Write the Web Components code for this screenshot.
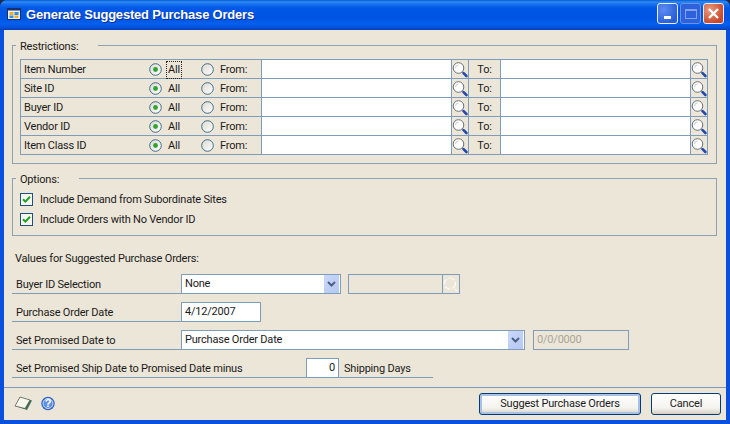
<!DOCTYPE html>
<html>
<head>
<meta charset="utf-8">
<title>Generate Suggested Purchase Orders</title>
<style>
  html { background: #1b2a4a; }
  body { margin: 0; font: 11px Roboto, "Liberation Sans", Arial, sans-serif; letter-spacing: -.2px; color: #1a1a1a; }
</style>
</head>
<body>
<xp-window caption="Generate Suggested Purchase Orders">
  <xp-group caption="Restrictions:">
    <range-table>
      <range-row label="Item Number" focused></range-row>
      <range-row label="Site ID"></range-row>
      <range-row label="Buyer ID"></range-row>
      <range-row label="Vendor ID"></range-row>
      <range-row label="Item Class ID"></range-row>
    </range-table>
  </xp-group>
  <xp-group caption="Options:" class="options">
    <xp-check>Include Demand from Subordinate Sites</xp-check>
    <xp-check>Include Orders with No Vendor ID</xp-check>
  </xp-group>
  <values-form></values-form>
  <dialog-footer></dialog-footer>
</xp-window>

<script>
const LOOKUP_ICON = `<svg width="16" height="17" viewBox="0 0 16 17">
  <circle cx="6.5" cy="7" r="5.3" fill="#fff" stroke="#6a6f76" stroke-width="1"/>
  <path d="M3.5 7a3 3 0 0 1 3-3" fill="none" stroke="#c4cad2"/>
  <path d="M10.5 11l1 1" stroke="#888" stroke-width="1.3"/>
  <path d="M11.6 12.2l2.8 2.8" stroke="#2348b0" stroke-width="2.6" stroke-linecap="round"/>
</svg>`;

const LOOKUP_OFF_ICON = `<svg width="16" height="17" viewBox="0 0 16 17">
  <circle cx="7" cy="7.5" r="5.5" fill="none" stroke="#fbfaf5" stroke-width="1.2" stroke-dasharray="6 2"/>
  <path d="M12 13l2 2" stroke="#fbfaf5" stroke-width="1.6"/>
</svg>`;

const CHEVRON = `<svg width="9" height="7" viewBox="0 0 9 7"><path d="M1 1l3.5 3.5L8 1" fill="none" stroke="#4d6185" stroke-width="2"/></svg>`;

class XpWindow extends HTMLElement {
  connectedCallback() {
    this.attachShadow({ mode: 'open' });
    this.shadowRoot.innerHTML = `
      <style>
        :host { display: block; width: 730px; height: 424px; }
        .frame {
          height: 424px; box-sizing: border-box; display: flex; flex-direction: column;
          background: #0a50de; border-radius: 7px 7px 0 0; overflow: hidden;
        }
        .bar {
          height: 30px; flex: none; display: flex; align-items: center; padding: 0 6px 3px 7px; box-sizing: border-box;
          background: linear-gradient(#0a5ad4 0, #2d8bf5 2px, #1a6ff0 4px, #0058e6 8px, #0054e3 18px, #0460ec 24px, #0454e0 27px, #0840b8 30px);
        }
        .icon { display: block; margin-right: 5px; }
        .title {
          flex: 1; color: #fff; font: bold 13px "Liberation Sans", Arial, sans-serif; letter-spacing: -.2px;
          text-shadow: 1px 1px 0 #0a2f9a; position: relative; top: 1px;
        }
        .caps { display: flex; gap: 2px; }
        .cap {
          width: 21px; height: 21px; box-sizing: border-box; border: 1px solid #e8eefc; border-radius: 3px;
          background: radial-gradient(circle at 30% 30%, #5d8cf0, #2a5ed8 75%); position: relative;
        }
        .cap.off { background: #2d62dc; border-color: #6d93e6; }
        .cap.close { background: radial-gradient(circle at 30% 30%, #e89a80, #c9472a 75%); }
        .cap svg { display: block; position: absolute; left: 3px; top: 3px; }
        .body {
          flex: 1; margin: 0 4px 4px; background: #ece6d8; display: flex; flex-direction: column; min-height: 0;
        }
      </style>
      <div class="frame">
        <div class="bar">
          <svg class="icon" width="14" height="12" viewBox="0 0 14 12">
            <rect width="14" height="12" fill="#e8eef8"/>
            <rect x="0" y="0" width="14" height="2.5" fill="#16306e"/>
            <rect x="0" y="0" width="1" height="12" fill="#16306e"/>
            <rect x="13" y="0" width="1" height="12" fill="#16306e"/>
            <rect x="0" y="11" width="14" height="1" fill="#16306e"/>
            <rect x="2.5" y="4" width="4" height="3" fill="#f0b020"/>
            <rect x="7.5" y="4" width="4" height="3" fill="#3a8ad8"/>
            <rect x="2.5" y="7.5" width="4" height="2.5" fill="#3a8ad8"/>
            <rect x="7.5" y="7.5" width="4" height="2.5" fill="#f0b020"/>
          </svg>
          <span class="title">${this.getAttribute('caption')}</span>
          <div class="caps">
            <div class="cap"><svg width="13" height="13"><rect x="3" y="9" width="7" height="3" fill="#fff"/></svg></div>
            <div class="cap off"><svg width="13" height="13"><rect x="1.5" y="2.5" width="11" height="9" fill="none" stroke="#7fa2ea"/><rect x="1" y="2" width="12" height="2" fill="#7fa2ea"/></svg></div>
            <div class="cap close"><svg width="13" height="13"><path d="M2 2l9 9M11 2l-9 9" stroke="#fff" stroke-width="2.4"/></svg></div>
          </div>
        </div>
        <div class="body"><slot></slot></div>
      </div>
    `;
  }
}

class XpGroup extends HTMLElement {
  connectedCallback() {
    this.attachShadow({ mode: 'open' });
    this.shadowRoot.innerHTML = `
      <style>
        :host { display: block; margin: 7px 9px 0 8px; }
        :host(.options) { margin-top: 6px; }
        fieldset {
          margin: 0; border: 1px solid #8aa2b4; padding: 0 8px 8px 7px; min-width: 0;
        }
        legend { margin-left: -4px; padding: 3px 20px 0 4px; line-height: 14px; }
        :host(.options) fieldset { padding: 6px 7px 9px 7px; }
      </style>
      <fieldset>
        <legend>${this.getAttribute('caption')}</legend>
        <slot></slot>
      </fieldset>
    `;
  }
}

class RangeTable extends HTMLElement {
  connectedCallback() {
    this.attachShadow({ mode: 'open' });
    this.shadowRoot.innerHTML = `
      <style>
        :host { display: block; margin-top: 5px; border-top: 1px solid #7f9db9; border-left: 1px solid #7f9db9; }
      </style>
      <slot></slot>
    `;
  }
}

class RangeRow extends HTMLElement {
  connectedCallback() {
    const focused = this.hasAttribute('focused');
    this.attachShadow({ mode: 'open' });
    this.shadowRoot.innerHTML = `
      <style>
        :host {
          display: grid; grid-template-columns: 241px 190px 17px 32px 190px 17px; height: 19px; box-sizing: border-box;
          border-bottom: 1px solid #7f9db9;
        }
        .cell { border-right: 1px solid #7f9db9; display: flex; align-items: center; box-sizing: border-box; min-width: 0; }
        .label { padding: 1px 0 0 3px; }
        .name { width: 125px; }
        .input { background: #fff; }
        .btn { justify-content: center; }
        .to { justify-content: center; padding-top: 1px; }
        .all { width: 52px; display: flex; align-items: center; }
        .focus { display: inline-block; outline: 1px dotted #222; line-height: 14px; padding: 1px 1px; margin: -1px -1px; }
      </style>
      <div class="cell label">
        <span class="name">${this.getAttribute('label')}</span>
        <span class="all"><xp-radio checked><span class="${focused ? 'focus' : ''}">All</span></xp-radio></span>
        <xp-radio>From:</xp-radio>
      </div>
      <div class="cell input"></div>
      <div class="cell btn">${LOOKUP_ICON}</div>
      <div class="cell to">To:</div>
      <div class="cell input"></div>
      <div class="cell btn">${LOOKUP_ICON}</div>
    `;
  }
}

class XpRadio extends HTMLElement {
  connectedCallback() {
    const on = this.hasAttribute('checked');
    this.attachShadow({ mode: 'open' });
    this.shadowRoot.innerHTML = `
      <style>
        :host { display: inline-flex; align-items: center; gap: 6px; }
        svg { display: block; flex: none; }
      </style>
      <svg width="13" height="13" viewBox="0 0 13 13">
        <defs><linearGradient id="g" x1="0" y1="0" x2="1" y2="1"><stop offset="0" stop-color="#dcd9ce"/><stop offset="1" stop-color="#fff"/></linearGradient></defs>
        <circle cx="6.5" cy="6.5" r="5.8" fill="url(#g)" stroke="#3f6d8c" stroke-width="1"/>
        ${on ? '<circle cx="6.5" cy="6.5" r="2.4" fill="#2fa52f"/>' : ''}
      </svg>
      <slot></slot>
    `;
  }
}

class XpCheck extends HTMLElement {
  connectedCallback() {
    this.attachShadow({ mode: 'open' });
    this.shadowRoot.innerHTML = `
      <style>
        :host { display: flex; align-items: center; gap: 7px; height: 13px; margin-bottom: 7px; }
        :host(:last-child) { margin-bottom: 0; }
        svg { display: block; flex: none; }
      </style>
      <svg width="13" height="13" viewBox="0 0 13 13">
        <rect x=".5" y=".5" width="12" height="12" fill="#f6f5ee" stroke="#1c5180"/>
        <path d="M3 6.2l2.4 2.4L10 3.8" fill="none" stroke="#21a121" stroke-width="2"/>
      </svg>
      <slot></slot>
    `;
  }
}

class FormRow extends HTMLElement {
  connectedCallback() {
    this.attachShadow({ mode: 'open' });
    this.shadowRoot.innerHTML = `
      <style>
        :host { display: flex; align-items: flex-end; height: 20px; margin: 8px 0 0 8px; }
        .label {
          width: ${this.getAttribute('lw') || 169}px; height: 20px; box-sizing: border-box; flex: none;
          border-bottom: 1px solid #7f9db9; padding: 4px 0 0 4px; line-height: 14px;
        }
      </style>
      <div class="label">${this.getAttribute('label')}</div>
      <slot></slot>
    `;
  }
}

class XpField extends HTMLElement {
  connectedCallback() {
    const kind = this.getAttribute('kind') || 'text';
    let extra = '';
    if (kind === 'combo') extra = `<div class="drop">${CHEVRON}</div>`;
    if (kind === 'lookup') extra = `<div class="look">${LOOKUP_OFF_ICON}</div>`;
    this.attachShadow({ mode: 'open' });
    this.shadowRoot.innerHTML = `
      <style>
        :host {
          display: flex; height: 20px; box-sizing: border-box; width: ${this.getAttribute('w')}px; flex: none;
          border: 1px solid #7f9db9; background: #fff; margin-left: ${this.getAttribute('ml') || 0}px; position: relative;
        }
        :host([disabled]) { background: #ece6d8; color: #a8a596; }
        .txt { flex: 1; padding: 1px 2px 0 3px; line-height: 15px; min-width: 0; white-space: nowrap; }
        :host([right]) .txt { text-align: right; padding-right: 3px; }
        .drop {
          width: 15px; margin: 0 1px 0 0; background: linear-gradient(135deg, #c9d8f8, #b4c8f2);
          display: flex; align-items: center; justify-content: center;
        }
        .look { width: 16px; border-left: 1px solid #7f9db9; display: flex; align-items: center; justify-content: center; }
      </style>
      <div class="txt"><slot></slot></div>
      ${extra}
    `;
  }
}

class ValuesForm extends HTMLElement {
  connectedCallback() {
    this.attachShadow({ mode: 'open' });
    this.shadowRoot.innerHTML = `
      <style>
        :host { display: block; flex: 1; }
        .head { margin: 16px 0 0 11px; line-height: 14px; }
        .days {
          width: 94px; height: 20px; box-sizing: border-box; flex: none; border-bottom: 1px solid #7f9db9;
          padding: 4px 0 0 5px; line-height: 14px;
        }
      </style>
      <div class="head">Values for Suggested Purchase Orders:</div>
      <form-row label="Buyer ID Selection">
        <xp-field kind="combo" w="160">None</xp-field>
        <xp-field kind="lookup" w="112" ml="7" disabled></xp-field>
      </form-row>
      <form-row label="Purchase Order Date">
        <xp-field w="80">4/12/2007</xp-field>
      </form-row>
      <form-row label="Set Promised Date to">
        <xp-field kind="combo" w="344">Purchase Order Date</xp-field>
        <xp-field w="96" ml="8" disabled>0/0/0000</xp-field>
      </form-row>
      <form-row label="Set Promised Ship Date to Promised Date minus" lw="294">
        <xp-field w="33" right>0</xp-field>
        <div class="days">Shipping Days</div>
      </form-row>
    `;
  }
}

class XpButton extends HTMLElement {
  connectedCallback() {
    this.attachShadow({ mode: 'open' });
    this.shadowRoot.innerHTML = `
      <style>
        :host {
          display: flex; align-items: center; justify-content: center; height: 22px; box-sizing: border-box;
          border: 1px solid #003c74; border-radius: 3px;
          background: linear-gradient(#ffffff, #f4f3ee 70%, #d6d0c5);
        }
        :host([default]) { box-shadow: inset 0 0 0 2px #a9c0e8; }
      </style>
      <slot></slot>
    `;
  }
}

class DialogFooter extends HTMLElement {
  connectedCallback() {
    this.attachShadow({ mode: 'open' });
    this.shadowRoot.innerHTML = `
      <style>
        :host {
          display: flex; align-items: center; height: 33px; box-sizing: border-box; flex: none;
          border-top: 1px solid #7f9db9; padding: 0 5px 1px 10px;
        }
        .note { display: block; margin-right: 8px; }
        .help { display: block; }
        .space { flex: 1; }
        xp-button { width: 162px; }
        xp-button + xp-button { width: 70px; margin-left: 10px; }
        text { font: bold 11px "Liberation Sans", sans-serif; fill: #fff; }
      </style>
      <svg class="note" width="19" height="15" viewBox="0 0 19 15">
        <path d="M1 10L6 1l12 3.5L13 14z" fill="#3f6f55"/>
        <path d="M1 10L6 1l10 3L11 12.5z" fill="#f7f6ea" stroke="#555" stroke-width=".7"/>
      </svg>
      <svg class="help" width="14" height="15" viewBox="0 0 14 15">
        <circle cx="7" cy="7.5" r="6.7" fill="#2e62c4"/>
        <circle cx="7" cy="7.5" r="5" fill="#5f8fe0" stroke="#cfe0fa"/>
        <text x="7" y="11.4" text-anchor="middle">?</text>
      </svg>
      <div class="space"></div>
      <xp-button default>Suggest Purchase Orders</xp-button>
      <xp-button>Cancel</xp-button>
    `;
  }
}

customElements.define('xp-window', XpWindow);
customElements.define('xp-group', XpGroup);
customElements.define('range-table', RangeTable);
customElements.define('range-row', RangeRow);
customElements.define('xp-radio', XpRadio);
customElements.define('xp-check', XpCheck);
customElements.define('form-row', FormRow);
customElements.define('xp-field', XpField);
customElements.define('values-form', ValuesForm);
customElements.define('xp-button', XpButton);
customElements.define('dialog-footer', DialogFooter);
</script>
</body>
</html>
